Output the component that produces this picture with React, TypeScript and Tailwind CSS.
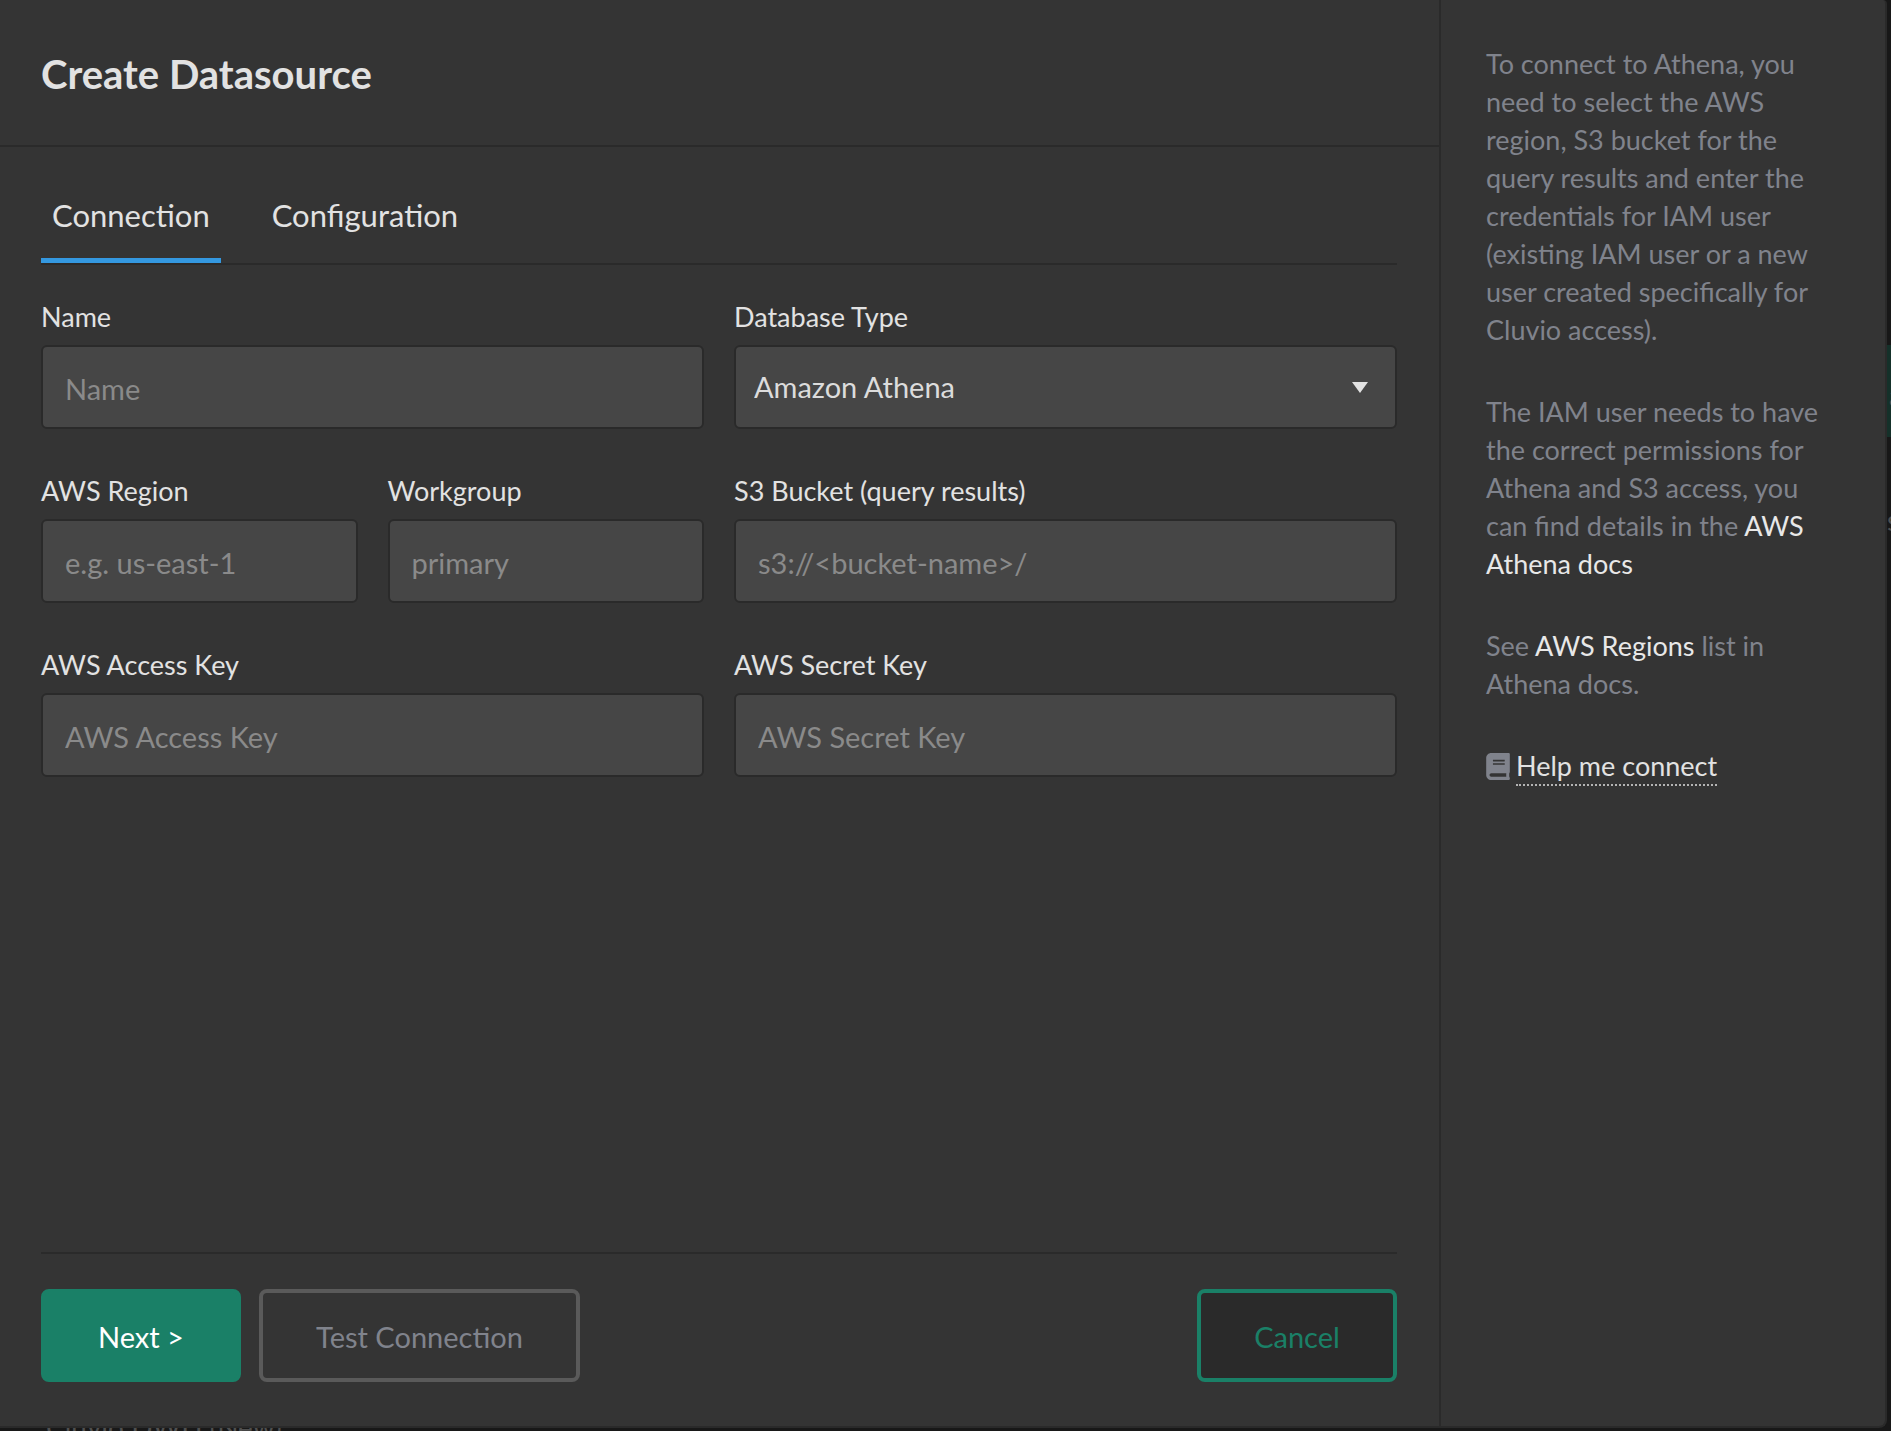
import React from "react";
import { FaBook } from "react-icons/fa";

const controlClass =
  "block h-[84px] w-full rounded-md border-2 border-[#2a2a2a] bg-[#464646] text-[29px] text-[#dcdcdc] outline-none";

type FieldProps = {
  id: string;
  label: string;
  placeholder: string;
  wide?: boolean;
};

function Label({ htmlFor, children }: { htmlFor: string; children: React.ReactNode }) {
  return (
    <label htmlFor={htmlFor} className="mb-3 block text-[27px] leading-[32px] whitespace-nowrap">
      {children}
    </label>
  );
}

function TextField({ id, label, placeholder, wide }: FieldProps) {
  return (
    <div className={wide ? "col-span-2" : "col-span-1"}>
      <Label htmlFor={id}>{label}</Label>
      <input
        id={id}
        type="text"
        placeholder={placeholder}
        className={`${controlClass} px-[22px] pt-0.5 placeholder:text-[#8a8a8a] placeholder:opacity-100`}
      />
    </div>
  );
}

function DatabaseTypeField() {
  return (
    <div className="col-span-2">
      <Label htmlFor="db-type">Database Type</Label>
      <div className="relative">
        <select id="db-type" defaultValue="athena" className={`${controlClass} appearance-none px-[18px]`}>
          <option value="athena">Amazon Athena</option>
        </select>
        <svg
          viewBox="0 0 16 11"
          aria-hidden="true"
          className="pointer-events-none absolute top-[37px] right-[29px] h-[11px] w-4 fill-[#e2e2e2]"
        >
          <path d="M0 0H16L8 11Z" />
        </svg>
      </div>
    </div>
  );
}

function Backdrop() {
  return (
    <div aria-hidden="true" className="absolute inset-0 overflow-hidden bg-[#181818] text-[28px] leading-[32px] text-[#505050]">
      <div className="absolute top-[345px] right-0 flex h-[92px] w-[60px] items-center bg-[#15312a] pt-2">
        <span className="ml-auto -mr-3">a</span>
      </div>
      <span className="absolute top-[504px] -right-2">s</span>
      <span className="absolute -bottom-3 left-[46px] whitespace-nowrap">Cluvio DWH (New)</span>
    </div>
  );
}

function Tabs() {
  const tab = "border-b-[5px] px-[11px] pb-6 text-[31px] leading-[38px]";
  return (
    <div role="tablist" className="flex gap-10 border-b-2 border-[#2a2a2a]">
      <button type="button" role="tab" aria-selected="true" className={`${tab} border-[#3498e0]`}>
        Connection
      </button>
      <button type="button" role="tab" aria-selected="false" className={`${tab} border-transparent`}>
        Configuration
      </button>
    </div>
  );
}

function HelpPanel() {
  return (
    <aside className="flex w-[446px] shrink-0 flex-col gap-11 border-l-2 border-[#2a2a2a] px-[45px] pt-[45px] text-[27px] leading-[38px] text-[#80838c]">
      <p>
        To connect to Athena, you need to select the AWS region, S3 bucket for the query results and
        enter the credentials for IAM user (existing IAM user or a new user created specifically for
        Cluvio access).
      </p>
      <p>
        The IAM user needs to have the correct permissions for Athena and S3 access, you can find
        details in the{" "}
        <a href="#athena-docs" className="text-[#e8e8e8]">
          AWS Athena docs
        </a>
      </p>
      <p>
        See{" "}
        <a href="#aws-regions" className="text-[#e8e8e8]">
          AWS Regions
        </a>{" "}
        list in Athena docs.
      </p>
      <p className="flex items-center gap-1.5">
        <FaBook aria-hidden="true" className="h-[27px] w-6 shrink-0" />
        <span>
          <a href="#help" className="border-b-2 border-dotted border-[#b4b4b4] pb-0.5 text-[#e2e2e2]">
            Help me connect
          </a>
        </span>
      </p>
    </aside>
  );
}

export default function App() {
  const button = "h-[93px] rounded-lg border-4 pt-0.5 text-[29px]";
  return (
    <div className="relative flex min-h-screen flex-col bg-[#181818] pr-1 pb-[3px] font-['Lato',sans-serif] text-[#e2e2e2]">
      <Backdrop />
      <section
        role="dialog"
        aria-labelledby="dialog-title"
        className="relative flex grow rounded-tr-sm rounded-br-lg border-r-2 border-b-2 border-[#2a2a2a] bg-[#343434]"
      >
        <form className="flex min-w-0 grow flex-col" onSubmit={(e) => e.preventDefault()}>
          <header className="border-b-2 border-[#2a2a2a] px-[41px] pt-[50px] pb-[47px]">
            <h1 id="dialog-title" className="text-[40px] leading-[48px] font-bold">
              Create Datasource
            </h1>
          </header>
          <div className="flex grow flex-col pt-[49px] pr-[42px] pl-[41px]">
            <Tabs />
            <div className="grid grid-cols-4 gap-x-[30px] gap-y-[46px] pt-9">
              <TextField id="name" label="Name" placeholder="Name" wide />
              <DatabaseTypeField />
              <TextField id="region" label="AWS Region" placeholder="e.g. us-east-1" />
              <TextField id="workgroup" label="Workgroup" placeholder="primary" />
              <TextField id="bucket" label="S3 Bucket (query results)" placeholder="s3://<bucket-name>/" wide />
              <TextField id="access-key" label="AWS Access Key" placeholder="AWS Access Key" wide />
              <TextField id="secret-key" label="AWS Secret Key" placeholder="AWS Secret Key" wide />
            </div>
            <footer className="mt-auto mb-11 flex gap-[18px] border-t-2 border-[#2a2a2a] pt-[35px]">
              <button type="submit" className={`${button} w-[200px] border-[#1a8067] bg-[#1a8067] text-white`}>
                Next &gt;
              </button>
              <button type="button" disabled className={`${button} w-[321px] border-[#5a5a5a] text-[#80838c]`}>
                Test Connection
              </button>
              <button
                type="button"
                className={`${button} ml-auto w-[200px] border-[#1a8067] bg-[#2a2a2a] text-[#1a8067]`}
              >
                Cancel
              </button>
            </footer>
          </div>
        </form>
        <HelpPanel />
      </section>
    </div>
  );
}
